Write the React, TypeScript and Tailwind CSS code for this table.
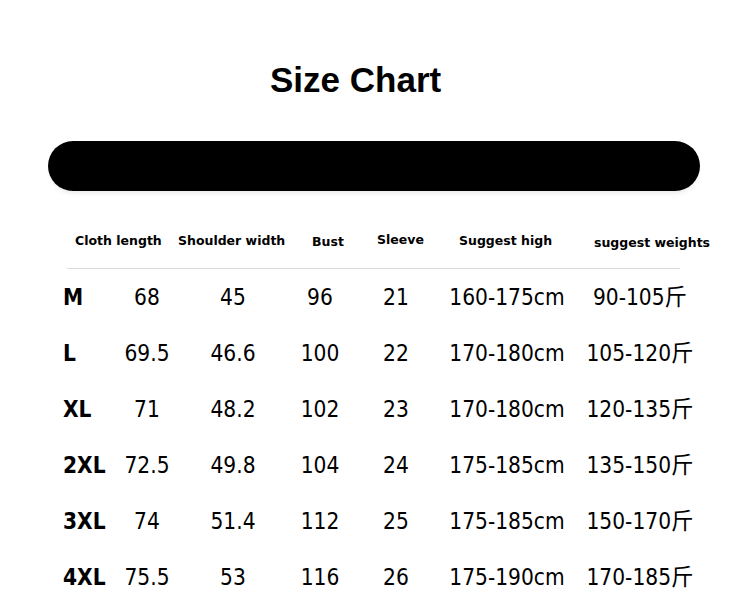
import React from "react";

const rows = [
  ["M", "68", "45", "96", "21", "160-175cm", "90-105斤"],
  ["L", "69.5", "46.6", "100", "22", "170-180cm", "105-120斤"],
  ["XL", "71", "48.2", "102", "23", "170-180cm", "120-135斤"],
  ["2XL", "72.5", "49.8", "104", "24", "175-185cm", "135-150斤"],
  ["3XL", "74", "51.4", "112", "25", "175-185cm", "150-170斤"],
  ["4XL", "75.5", "53", "116", "26", "175-190cm", "170-185斤"],
];

const cond = {
  fontFamily:
    "'DejaVu Sans Condensed', 'DejaVu Sans', 'Noto Sans CJK SC', sans-serif",
  fontStretch: "condensed" as const,
};

export default function App() {
  return (
    <div className="w-[750px] h-[599px] bg-white overflow-hidden text-black font-['Liberation_Sans',Arial,sans-serif]">
      <div className="pt-[62px] pl-[270px] flex">
        <h1 className="text-[35px] leading-none font-bold">Size Chart</h1>
      </div>
      <div className="mt-[44px] ml-[48px] w-[652px] h-[50px] rounded-[25px] bg-black shadow-[0_5px_6px_-4px_rgba(0,0,0,0.12)]" />
      <div className="mt-[42px] flex h-[16px] text-[12.5px] leading-[16px] font-bold whitespace-nowrap font-['DejaVu_Sans',sans-serif]">
        <span className="ml-[75px] w-[86px] text-center">Cloth length</span>
        <span className="ml-[17px] w-[106px] text-center">Shoulder width</span>
        <span className="ml-[28px] w-[32px] text-center translate-y-[1px]">Bust</span>
        <span className="ml-[32px] w-[49px] text-center -translate-y-[1px]">Sleeve</span>
        <span className="ml-[34px] w-[92px] text-center">Suggest high</span>
        <span className="ml-[43px] w-[116px] text-center translate-y-[2px]">suggest weights</span>
      </div>
      <div className="mt-[19px] ml-[67px] w-[613px] h-px bg-[#dcdcdc]" />
      <div className="flex flex-col">
        {rows.map((r) => (
          <div
            key={r[0]}
            className="h-[56px] grid grid-cols-[47px_74px_98px_76px_76px_146px_120px] items-center ml-[63px] text-[22.5px] leading-none whitespace-nowrap"
            style={cond}
          >
            <span className="font-bold text-left">{r[0]}</span>
            {r.slice(1).map((v, i) => (
              <span key={i} className="text-center">
                {v}
              </span>
            ))}
          </div>
        ))}
      </div>
    </div>
  );
}
